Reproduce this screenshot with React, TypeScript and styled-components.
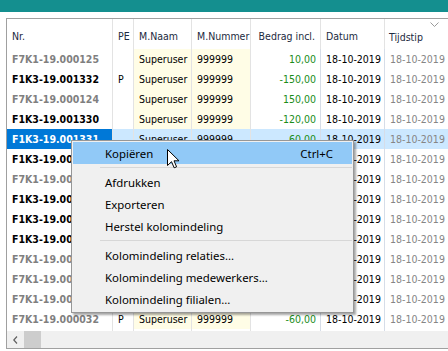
import React from "react";
import styled, { createGlobalStyle } from "styled-components";

const Global = createGlobalStyle`
  html, body { margin: 0; padding: 0; background: #fff; }
  body { width: 448px; height: 351px; overflow: hidden; }
`;

const Page = styled.div`
  width: 448px;
  height: 351px;
  overflow: hidden;
  position: relative;
  display: flex;
  flex-direction: column;
`;

const TopBar = styled.div`
  height: 12px;
  background: #148f8f;
  flex: none;
`;

const Body = styled.div`
  padding: 6px 0 0 6px;
  display: flex;
`;

const Grid = styled.div`
  width: 480px;
  flex: none;
  border: 1px solid #a0a0a0;
  border-right: none;
  display: flex;
  flex-direction: column;
  font-family: "DejaVu Sans Condensed", "DejaVu Sans", sans-serif;
  font-stretch: semi-condensed;
  font-size: 10.5px;
  background: #fff;
`;

const cols = "106px 21px 58px 59px 70px 64px 102px";

const HeaderRow = styled.div`
  display: grid;
  grid-template-columns: ${cols};
  height: 30px;
`;

const HeadCell = styled.div<{ $right?: boolean }>`
  box-sizing: border-box;
  border-right: 1px solid #e3e3e3;
  display: flex;
  align-items: center;
  justify-content: ${(p) => (p.$right ? "flex-end" : "flex-start")};
  padding: 4px ${(p) => (p.$right ? "5px" : "0")} 0 ${(p) => (p.$right ? "0" : "5px")};
  color: #1c2a40;
  white-space: nowrap;
`;

const SortHead = styled(HeadCell)`
  flex-direction: column;
  align-items: flex-start;
  justify-content: flex-start;
  padding: 0 0 0 4px;
`;

const SortGlyph = styled.svg`
  display: block;
  align-self: center;
  margin: 3px 0 0 -6px;
`;

const SortLabel = styled.div`
  margin-top: 4px;
`;

const Rows = styled.div`
  display: flex;
  flex-direction: column;
  height: 282px;
`;

const Row = styled.div<{ $sel?: boolean }>`
  display: grid;
  grid-template-columns: ${cols};
  height: 20px;
  background: ${(p) => (p.$sel ? "#cce8ff" : "transparent")};
`;

const Cell = styled.div<{
  $right?: boolean;
  $bold?: boolean;
  $color?: string;
  $yellow?: boolean;
  $focus?: boolean;
  $line?: string;
}>`
  box-sizing: border-box;
  border-right: 1px solid ${(p) => p.$line || "#e3e3e3"};
  display: flex;
  align-items: center;
  justify-content: ${(p) => (p.$right ? "flex-end" : "flex-start")};
  padding: 0 ${(p) => (p.$right ? "4px" : "0")} 0 ${(p) => (p.$right ? "0" : "5px")};
  font-weight: ${(p) => (p.$bold ? 700 : 400)};
  color: ${(p) => (p.$focus ? "#fff" : p.$color || "#000")};
  background: ${(p) => (p.$focus ? "#0078d7" : p.$yellow ? "#fffde6" : "transparent")};
  white-space: nowrap;
  overflow: hidden;
`;

const FillRow = styled.div`
  display: grid;
  grid-template-columns: ${cols};
  flex: 1;
`;

const FillCell = styled.div<{ $yellow?: boolean; $line?: string }>`
  border-right: 1px solid ${(p) => p.$line || "#e3e3e3"};
  background: ${(p) => (p.$yellow ? "#fffde6" : "transparent")};
`;

const HScroll = styled.div`
  height: 17px;
  background: #f0f0f0;
  display: flex;
  align-items: center;
`;

const ArrowBtn = styled.div`
  width: 17px;
  height: 17px;
  display: flex;
  align-items: center;
  justify-content: center;
`;

const Thumb = styled.div`
  width: 17px;
  height: 17px;
  background: #cdcdcd;
`;

const Menu = styled.div`
  position: absolute;
  left: 71px;
  top: 140px;
  width: 283px;
  box-sizing: border-box;
  background: #f0f0f0;
  border: 1px solid #979797;
  box-shadow: 2px 2px 2px rgba(0, 0, 0, 0.35);
  padding: 1px 1px 2px 1px;
  font-family: "Noto Sans", sans-serif;
  font-size: 11.4px;
  color: #000;
`;

const Item = styled.div<{ $hot?: boolean }>`
  height: 22px;
  display: flex;
  align-items: center;
  justify-content: space-between;
  padding: 0 19px 0 32px;
  background: ${(p) => (p.$hot ? "#91c9f7" : "transparent")};
`;

const Sep = styled.div`
  height: 7px;
  display: flex;
  align-items: center;
  padding-left: 27px;
  &::after {
    content: "";
    flex: 1;
    height: 1px;
    background: #d7d7d7;
  }
`;

const Cursor = styled.svg`
  position: absolute;
  left: 167px;
  top: 149px;
`;

type R = {
  nr: string;
  pe: string;
  amt: string;
  gray: boolean;
};

const rows: R[] = [
  { nr: "F7K1-19.000125", pe: "", amt: "10,00", gray: true },
  { nr: "F1K3-19.001332", pe: "P", amt: "-150,00", gray: false },
  { nr: "F7K1-19.000124", pe: "", amt: "150,00", gray: true },
  { nr: "F1K3-19.001330", pe: "", amt: "-120,00", gray: false },
  { nr: "F1K3-19.001331", pe: "", amt: "-60,00", gray: false },
  { nr: "F1K3-19.001329", pe: "", amt: "-60,00", gray: false },
  { nr: "F7K1-19.000123", pe: "", amt: "60,00", gray: true },
  { nr: "F1K3-19.001328", pe: "", amt: "-60,00", gray: false },
  { nr: "F1K3-19.001327", pe: "", amt: "-60,00", gray: false },
  { nr: "F1K3-19.001326", pe: "", amt: "-60,00", gray: false },
  { nr: "F7K1-19.000035", pe: "", amt: "60,00", gray: true },
  { nr: "F7K1-19.000034", pe: "", amt: "60,00", gray: true },
  { nr: "F7K1-19.000033", pe: "", amt: "60,00", gray: true },
  { nr: "F7K1-19.000032", pe: "P", amt: "-60,00", gray: true },
];

const BLUE_LINE = "#d6dde8";

export default function App() {
  return (
    <Page>
      <Global />
      <TopBar />
      <Body>
        <Grid>
          <HeaderRow>
            <HeadCell>Nr.</HeadCell>
            <HeadCell>PE</HeadCell>
            <HeadCell>M.Naam</HeadCell>
            <HeadCell>M.Nummer</HeadCell>
            <HeadCell $right>Bedrag incl.</HeadCell>
            <HeadCell>Datum</HeadCell>
            <SortHead>
              <SortGlyph width="9" height="5" viewBox="0 0 9 5">
                <polyline points="0.5,0.5 4.5,4.5 8.5,0.5" fill="none" stroke="#9a9a9a" strokeWidth="1" />
              </SortGlyph>
              <SortLabel>Tijdstip</SortLabel>
            </SortHead>
          </HeaderRow>
          <Rows>
            {rows.map((r, i) => {
              const sel = i === 4;
              return (
                <Row key={i} $sel={sel}>
                  <Cell $bold $color={r.gray ? "#7f7f7f" : "#000"} $focus={sel}>
                    {r.nr}
                  </Cell>
                  <Cell>{r.pe}</Cell>
                  <Cell $yellow={!sel}>Superuser</Cell>
                  <Cell $yellow={!sel}>999999</Cell>
                  <Cell $right $color="#1a8c1a" $line={BLUE_LINE}>
                    {r.amt}
                  </Cell>
                  <Cell $line={BLUE_LINE}>18-10-2019</Cell>
                  <Cell $color="#858585">18-10-2019</Cell>
                </Row>
              );
            })}
            <FillRow>
              <FillCell />
              <FillCell />
              <FillCell />
              <FillCell />
              <FillCell $line={BLUE_LINE} />
              <FillCell $line={BLUE_LINE} />
              <FillCell />
            </FillRow>
          </Rows>
          <HScroll>
            <ArrowBtn>
              <svg width="5" height="8" viewBox="0 0 5 8">
                <polyline points="4,0.5 0.8,4 4,7.5" fill="none" stroke="#606060" strokeWidth="1.2" />
              </svg>
            </ArrowBtn>
            <Thumb />
          </HScroll>
        </Grid>
      </Body>
      <Menu>
        <Item $hot>
          <span>Kopiëren</span>
          <span>Ctrl+C</span>
        </Item>
        <Sep />
        <Item>Afdrukken</Item>
        <Item>Exporteren</Item>
        <Item>Herstel kolomindeling</Item>
        <Sep />
        <Item>Kolomindeling relaties...</Item>
        <Item>Kolomindeling medewerkers...</Item>
        <Item>Kolomindeling filialen...</Item>
      </Menu>
      <Cursor width="13" height="20" viewBox="0 0 13 20">
        <path
          d="M0.5 0.5 L0.5 16.5 L4.5 12.7 L7.2 18.8 L9.6 17.8 L7 11.8 L12 11.8 Z"
          fill="#fff"
          stroke="#000"
          strokeWidth="1"
          strokeLinejoin="miter"
        />
      </Cursor>
    </Page>
  );
}
